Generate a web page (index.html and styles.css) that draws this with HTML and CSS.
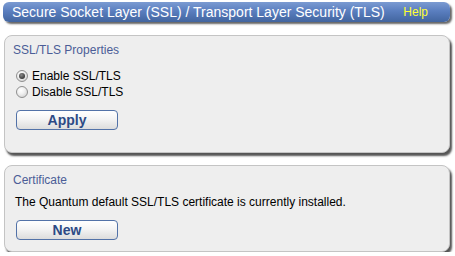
FILE: index.html
```html
<!DOCTYPE html>
<html lang="en">
<head>
  <meta charset="UTF-8" />
  <title>SSL/TLS</title>
  <link rel="stylesheet" href="styles.css">
</head>
<body>
  <div class="page">
    <div class="title-bar">
      <span class="title-text">Secure Socket Layer (SSL) / Transport Layer Security (TLS)</span>
      <a class="help-link">Help</a>
    </div>

    <div class="panel">
      <div class="panel-title">SSL/TLS Properties</div>
      <div class="radios">
        <label class="radio-row"><input type="radio" name="ssl" checked> Enable SSL/TLS</label>
        <label class="radio-row"><input type="radio" name="ssl"> Disable SSL/TLS</label>
      </div>
      <button class="action-btn">Apply</button>
    </div>

    <div class="panel panel-cert">
      <div class="panel-title">Certificate</div>
      <p class="cert-text">The Quantum default SSL/TLS certificate is currently installed.</p>
      <button class="action-btn">New</button>
    </div>
  </div>
</body>
</html>
```

FILE: styles.css
```css
* {
  box-sizing: border-box;
  margin: 0;
  padding: 0;
}
html, body {
  background: #ffffff;
  font-family: "Liberation Sans", Arial, sans-serif;
  font-size: 12px;
  color: #000;
}
.page {
  padding: 2px 5px 0 3px;
  display: flex;
  flex-direction: column;
}
.title-bar {
  height: 20px;
  display: flex;
  align-items: center;
  justify-content: space-between;
  padding: 0 22px 0 9px;
  border-radius: 6px;
  background: linear-gradient(to bottom, #7b9bd2 0%, #5a7ebf 45%, #42659f 100%);
  box-shadow: 2px 2px 2px #666;
}
.title-text {
  color: #fff;
  font-size: 14px;
}
.help-link {
  color: #ffff33;
  font-size: 12px;
}
.panel {
  margin: 13px 0 0 1px;
  height: 118px;
  background: #eeeeee;
  border: 1px solid #c4c4c4;
  border-radius: 8px;
  box-shadow: 2px 3px 2px #555;
  padding: 7px 10px 0 8px;
}
.panel-cert {
  margin-top: 12px;
  height: 87px;
}
.panel-title {
  color: #4b5d97;
  font-size: 12px;
  line-height: 14px;
}
.radios {
  margin-top: 11px;
  display: flex;
  flex-direction: column;
}
.radio-row {
  display: flex;
  align-items: center;
  height: 16px;
  font-size: 12px;
}
.radio-row input {
  appearance: none;
  width: 12px;
  height: 12px;
  margin: 0 4px 0 3px;
  border: 1px solid #8f8f8f;
  border-radius: 50%;
  background: radial-gradient(circle at 40% 35%, #ffffff 0%, #f0f0f0 40%, #c8c8c8 100%);
  position: relative;
}
.radio-row input:checked::after {
  content: '';
  position: absolute;
  left: 2px;
  top: 2px;
  width: 6px;
  height: 6px;
  border-radius: 50%;
  background: radial-gradient(circle at 40% 35%, #8a8a8a 0%, #3c3c3c 70%, #222 100%);
}
.action-btn {
  margin: 10px 0 0 3px;
  width: 102px;
  height: 20px;
  border: 1px solid #5272a8;
  border-radius: 4px;
  background: linear-gradient(to bottom, #ffffff 0%, #f4f4f4 45%, #dcdcdc 100%);
  color: #2c4a85;
  font-family: "Liberation Sans", Arial, sans-serif;
  font-weight: bold;
  font-size: 14px;
}
.cert-text {
  margin: 8px 0 1px 2px;
  font-size: 12px;
  line-height: 14px;
}
```
